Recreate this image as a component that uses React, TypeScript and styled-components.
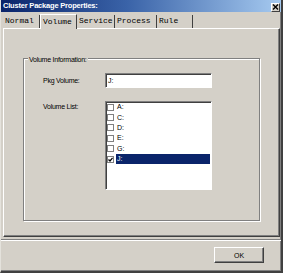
import React from 'react';
import styled, { createGlobalStyle } from 'styled-components';

const Global = createGlobalStyle`
  html, body { margin: 0; padding: 0; background: #D4D0C8; }
  body { font-family: "Liberation Sans", Arial, sans-serif; }
  * { box-sizing: border-box; }
`;

const Window = styled.div`
  width: 283px;
  height: 273px;
  background: #D4D0C8;
  display: flex;
  flex-direction: column;
  border-left: 1px solid #E4E2DC;
  border-right: 2px solid #404040;
  border-bottom: 2px solid #404040;
  box-shadow: inset -1px -1px 0 #808080;
  overflow: hidden;
`;

const TitleBar = styled.div`
  height: 12px;
  flex: none;
  display: flex;
  align-items: center;
  justify-content: space-between;
  padding: 0 1px 0 2px;
  background: linear-gradient(to right, #0A246A 0%, #3A63A8 45%, #A6CAF0 100%);
`;

const Title = styled.span`
  color: #fff;
  font: bold 7.5px "Liberation Sans", Arial, sans-serif;
  letter-spacing: -0.2px;
  line-height: 12px;
`;

const CloseButton = styled.div`
  width: 9px;
  height: 9px;
  margin-top: 2px;
  background: #D4D0C8;
  border-top: 1px solid #fff;
  border-left: 1px solid #fff;
  border-right: 1px solid #404040;
  border-bottom: 1px solid #404040;
  display: flex;
  align-items: center;
  justify-content: center;
`;

const TabStrip = styled.div`
  height: 16px;
  flex: none;
  display: flex;
  align-items: flex-end;
  padding-left: 2px;
`;

const Tab = styled.div<{ $active?: boolean; $w: number }>`
  width: ${(p) => p.$w}px;
  height: ${(p) => (p.$active ? 15 : 13)}px;
  padding-left: 2px;
  font: 8px "Liberation Mono", "Courier New", monospace;
  line-height: ${(p) => (p.$active ? 13 : 12)}px;
  color: #000;
  border-right: 1px solid #404040;
  ${(p) =>
    p.$active
      ? `border-left: 1px solid #fff; border-top: 1px solid #fff; margin-bottom: -1px; position: relative; z-index: 1; background: #D4D0C8;`
      : ``}
`;

const Panel = styled.div`
  height: 209px;
  flex: none;
  margin: 0 1px 0 2px;
  border-top: 1px solid #fff;
  border-left: 1px solid #fff;
  border-right: 1px solid #404040;
  border-bottom: 1px solid #404040;
  box-shadow: inset -1px -1px 0 #808080;
  padding: 29px 0 0 19px;
`;

const GroupBox = styled.div`
  position: relative;
  width: 237px;
  height: 163px;
  border: 1px solid #808080;
  box-shadow: inset 1px 1px 0 #fff, 1px 1px 0 #fff;
  padding: 14px 0 0 19px;
  display: flex;
  flex-direction: column;
  gap: 13px;
`;

const Legend = styled.span`
  position: absolute;
  top: -4px;
  left: 4px;
  padding: 0 1px;
  background: #D4D0C8;
  font: 7px "Liberation Sans", Arial, sans-serif;
  letter-spacing: -0.25px;
  line-height: 9px;
  color: #000;
`;

const FieldRow = styled.div<{ $top?: boolean }>`
  display: grid;
  grid-template-columns: 62px 107px;
  align-items: ${(p) => (p.$top ? 'start' : 'center')};
`;

const Label = styled.span<{ $pt?: number }>`
  font: 7px "Liberation Sans", Arial, sans-serif;
  letter-spacing: -0.25px;
  color: #000;
  padding-top: ${(p) => p.$pt ?? 0}px;
`;

const TextBox = styled.div`
  height: 15px;
  background: #fff;
  border: 1px solid;
  border-color: #808080 #fff #fff #808080;
  box-shadow: inset 1px 1px 0 #404040;
  padding-left: 2px;
  font: 7px "Liberation Sans", Arial, sans-serif;
  line-height: 13px;
  color: #000;
`;

const ListBox = styled.div`
  height: 89px;
  background: #fff;
  border: 1px solid;
  border-color: #808080 #fff #fff #808080;
  box-shadow: inset 1px 1px 0 #404040;
  display: flex;
  flex-direction: column;
  padding-right: 1px;
`;

const ListItem = styled.div`
  height: 10.4px;
  display: flex;
  align-items: center;
  padding-left: 1px;
`;

const Check = styled.span`
  width: 7px;
  height: 7px;
  flex: none;
  margin-right: 2px;
  border: 1px solid #808080;
  background: #fff;
  display: flex;
  align-items: center;
  justify-content: center;
`;

const ItemText = styled.span<{ $selected?: boolean }>`
  flex: 1;
  height: 10px;
  padding-left: 1px;
  font: 7px "Liberation Sans", Arial, sans-serif;
  line-height: 10px;
  color: ${(p) => (p.$selected ? '#fff' : '#000')};
  background: ${(p) => (p.$selected ? '#0A246A' : 'transparent')};
`;

const Footer = styled.div`
  flex: 1;
  margin-top: 2px;
  border-top: 1px solid #808080;
  box-shadow: inset 0 1px 0 #fff;
  display: flex;
  justify-content: flex-end;
  align-items: flex-start;
  padding: 7px 17px 0 0;
`;

const Button = styled.div`
  width: 50px;
  height: 16px;
  border-top: 1px solid #fff;
  border-left: 1px solid #fff;
  border-right: 1px solid #404040;
  border-bottom: 1px solid #404040;
  box-shadow: inset -1px -1px 0 #808080;
  display: flex;
  align-items: center;
  justify-content: center;
  font: 7px "Liberation Sans", Arial, sans-serif;
  color: #000;
`;

const tabs = [
  { label: 'Normal', w: 37 },
  { label: 'Volume', w: 37, active: true },
  { label: 'Service', w: 38 },
  { label: 'Process', w: 42 },
  { label: 'Rule', w: 36 },
];

const volumes = [
  { name: 'A:', checked: false },
  { name: 'C:', checked: false },
  { name: 'D:', checked: false },
  { name: 'E:', checked: false },
  { name: 'G:', checked: false },
  { name: 'J:', checked: true, selected: true },
];

export default function App() {
  return (
    <>
      <Global />
      <Window>
        <TitleBar>
          <Title>Cluster Package Properties:</Title>
          <CloseButton>
            <svg width="7" height="6" viewBox="0 0 7 6">
              <path d="M1 0.5 L6 5.5 M6 0.5 L1 5.5" stroke="#000" strokeWidth="1.4" />
            </svg>
          </CloseButton>
        </TitleBar>
        <TabStrip>
          {tabs.map((t) => (
            <Tab key={t.label} $w={t.w} $active={t.active}>
              {t.label}
            </Tab>
          ))}
        </TabStrip>
        <Panel>
          <GroupBox>
            <Legend>Volume Information:</Legend>
            <FieldRow>
              <Label>Pkg Volume:</Label>
              <TextBox>J:</TextBox>
            </FieldRow>
            <FieldRow $top>
              <Label $pt={2}>Volume List:</Label>
              <ListBox>
                {volumes.map((v) => (
                  <ListItem key={v.name}>
                    <Check>
                      {v.checked && (
                        <svg width="5" height="5" viewBox="0 0 5 5">
                          <path d="M0.5 2.5 L2 4 L4.6 0.8" stroke="#000" strokeWidth="1.3" fill="none" />
                        </svg>
                      )}
                    </Check>
                    <ItemText $selected={v.selected}>{v.name}</ItemText>
                  </ListItem>
                ))}
              </ListBox>
            </FieldRow>
          </GroupBox>
        </Panel>
        <Footer>
          <Button>OK</Button>
        </Footer>
      </Window>
    </>
  );
}
